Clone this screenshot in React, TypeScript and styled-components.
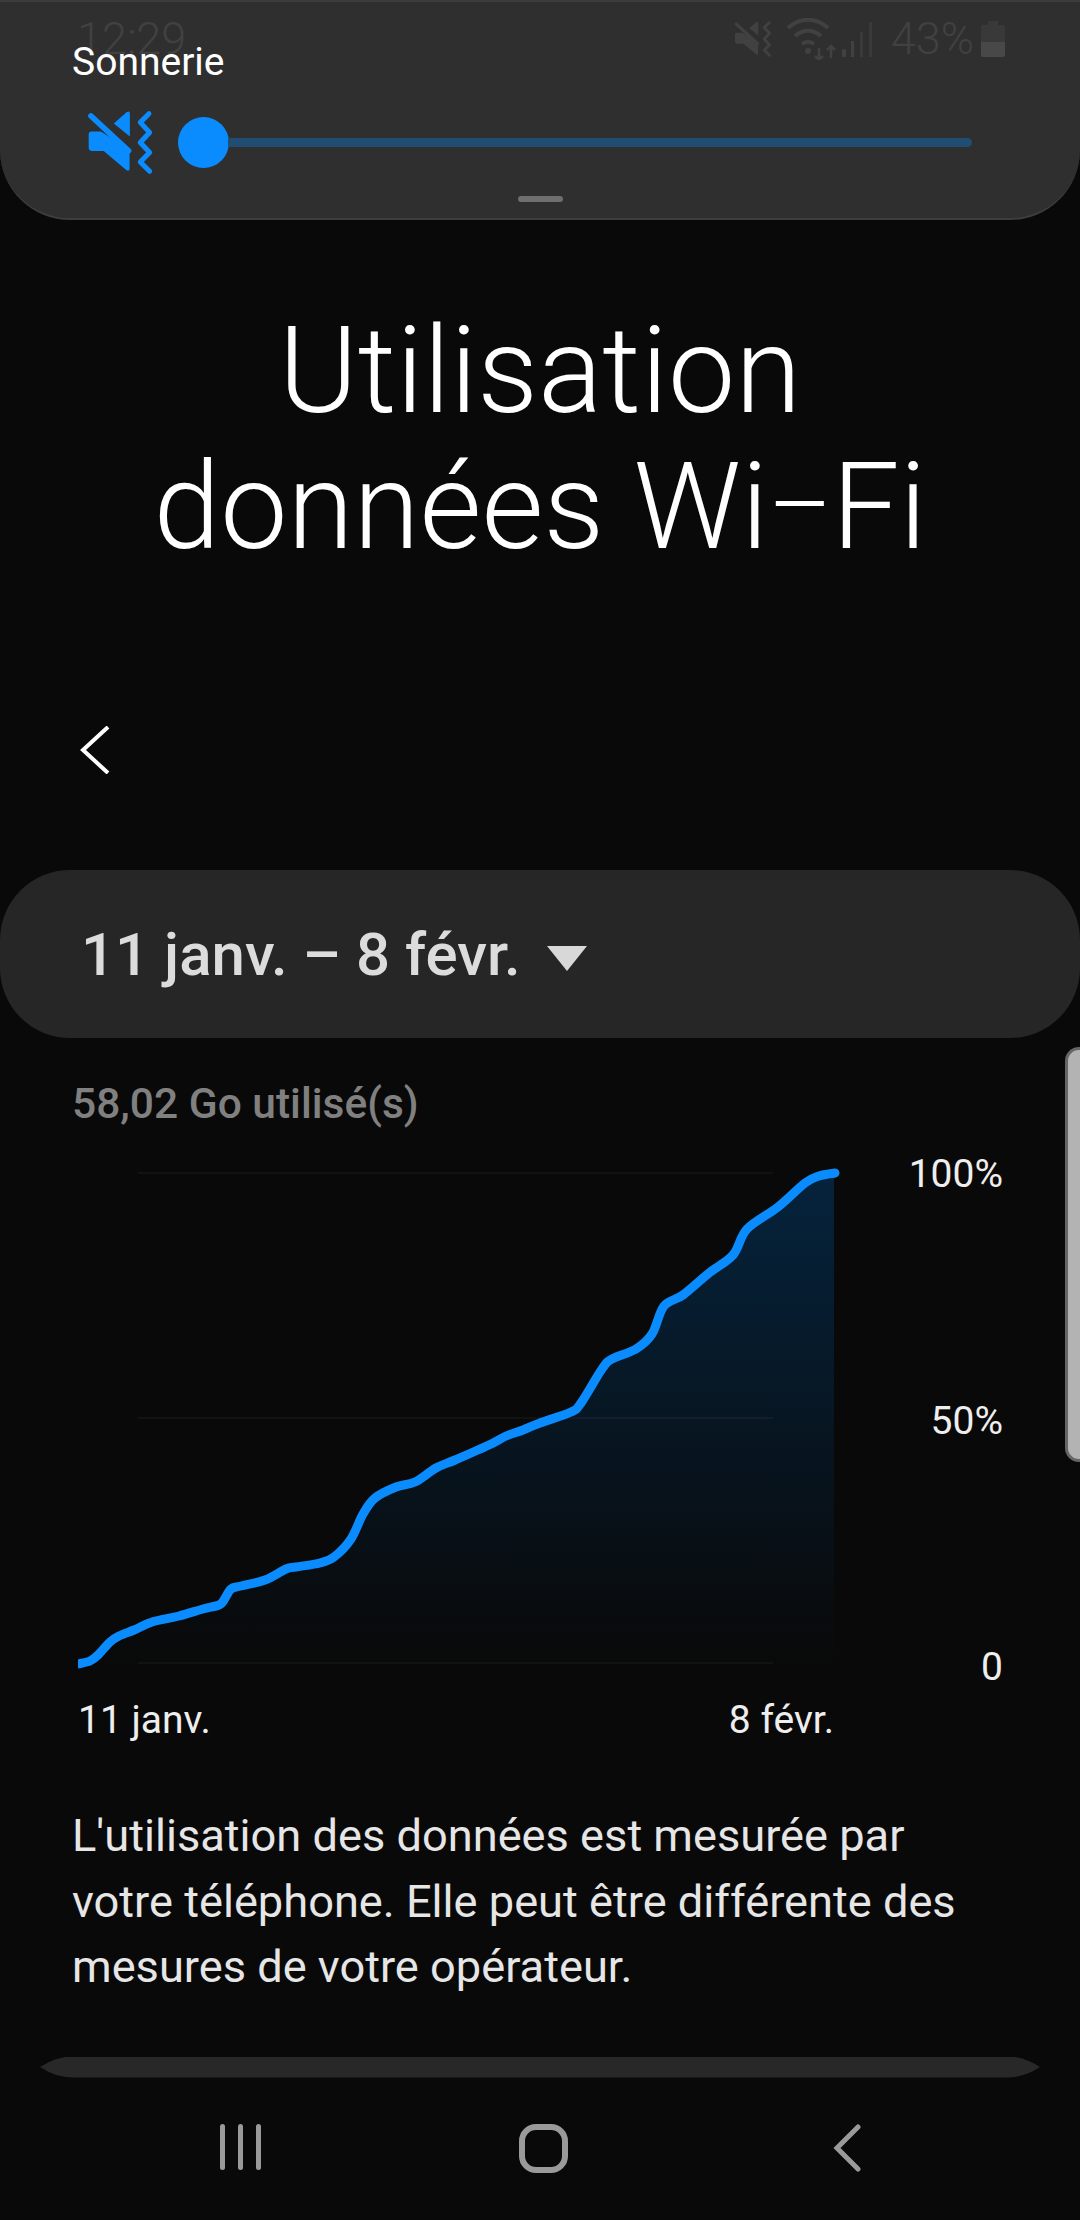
import React from 'react';
import styled, { createGlobalStyle } from 'styled-components';

const GlobalStyle = createGlobalStyle`
  html, body {
    margin: 0;
    padding: 0;
    background: #090909;
  }
`;

const Page = styled.div`
  position: relative;
  width: 1080px;
  height: 2220px;
  overflow: hidden;
  background: #090909;
  color: #fff;
  font-family: Roboto, 'Noto Sans', sans-serif;
  display: flex;
  flex-direction: column;
`;

const Panel = styled.div`
  position: relative;
  box-sizing: border-box;
  height: 220px;
  flex-shrink: 0;
  background: #2f2f2f;
  border-top: 2px solid #3c3c3c;
  border-bottom: 2px solid #3d3d3d;
  border-radius: 0 0 70px 70px;
  padding: 38px 0 0 72px;
`;

const StatusBar = styled.div`
  position: absolute;
  top: 16px;
  left: 77px;
  right: 75px;
  display: flex;
  align-items: center;
  color: #414141;
`;

const StatusTime = styled.span`
  font-size: 45px;
  font-weight: 300;
  line-height: 42px;
  flex: 1;
`;

const StatusPercent = styled.span`
  font-size: 45px;
  font-weight: 300;
  line-height: 42px;
  margin: 0 7px 0 17px;
`;

const PanelLabel = styled.div`
  position: relative;
  font-size: 39px;
  line-height: 44px;
  color: #fff;
`;

const SliderRow = styled.div`
  display: flex;
  align-items: center;
  margin: 25px 0 0 15px;
  height: 67px;
`;

const Thumb = styled.div`
  width: 51px;
  height: 51px;
  border-radius: 50%;
  background: #0a8cff;
  margin-left: 24px;
  flex-shrink: 0;
`;

const Track = styled.div`
  width: 744px;
  height: 9px;
  margin-left: -1px;
  border-radius: 0 5px 5px 0;
  background: #214d73;
`;

const Grabber = styled.div`
  position: absolute;
  left: 518px;
  top: 194px;
  width: 45px;
  height: 6px;
  border-radius: 3px;
  background: #6f6f6f;
`;

const Title = styled.h1`
  margin: 83px 0 0;
  font-size: 120px;
  line-height: 136px;
  font-weight: 300;
  text-align: center;
  color: #fff;
`;

const TitleDash = styled.span`
  font-size: 98px;
  line-height: 0;
  vertical-align: 9px;
`;

const BackButton = styled.div`
  display: flex;
  height: 48px;
  margin: 151px 0 0 80px;
`;

const RangePill = styled.div`
  box-sizing: border-box;
  height: 168px;
  margin-top: 96px;
  border-radius: 70px;
  background: #262626;
  padding-left: 81px;
  display: flex;
  align-items: center;
  gap: 26px;
`;

const RangeText = styled.span`
  font-size: 60px;
  font-weight: 500;
  color: #dcdcdc;
`;

const Caret = styled.div`
  width: 0;
  height: 0;
  margin-top: 8px;
  border-left: 20px solid transparent;
  border-right: 20px solid transparent;
  border-top: 25px solid #d8d8d8;
`;

const UsedLabel = styled.div`
  margin: 43px 0 0 72px;
  font-size: 42.5px;
  line-height: 46px;
  font-weight: 500;
  color: #808080;
`;

const ChartRow = styled.div`
  display: flex;
  height: 515px;
  margin: 34px 77px 0 78px;
`;

const YAxis = styled.div`
  flex: 1;
  display: flex;
  flex-direction: column;
  justify-content: space-between;
  align-items: flex-end;
  margin-bottom: -4px;
`;

const AxisLabel = styled.span`
  font-size: 39px;
  line-height: 26px;
  color: #eee;
`;

const XAxis = styled.div`
  display: flex;
  justify-content: space-between;
  width: 756px;
  margin: 22px 0 0 78px;
  font-size: 39px;
  line-height: 44px;
  color: #eee;
`;

const Note = styled.p`
  margin: 61px 0 0 72px;
  width: 960px;
  font-size: 45.2px;
  line-height: 65.5px;
  color: #e6e6e6;
  white-space: nowrap;
`;

const NextCard = styled.div`
  flex-shrink: 0;
  height: 21px;
  margin: 57px 40px 0;
  background: #282828;
  clip-path: path('M0 10.5Q16 0 32 0H968Q984 0 1000 10.5Q984 21 968 21H32Q16 21 0 10.5Z');
`;

const NavBar = styled.div`
  flex: 1;
  display: grid;
  grid-template-columns: repeat(3, 303px);
  padding: 46px 0 0 89px;
  align-items: start;
  justify-items: center;
`;

const NavIcon = styled.svg`
  display: block;
  color: #9a9a9a;
`;

const SideHandle = styled.div`
  position: absolute;
  top: 1047px;
  right: 0;
  box-sizing: border-box;
  width: 15px;
  height: 415px;
  background: #b3b3b3;
  border: 3px solid #666;
  border-right: none;
  border-radius: 14px 0 0 14px;
`;

const MuteVibrate = ({ size, color }: { size: number; color: string }) => (
  <svg width={size} height={size} viewBox="80 60 200 200" fill={color} style={{ display: 'block', flexShrink: 0 }}>
    <path d="M85 136q0-9 9-9h27l86 53v60q-2 7-10 2l-67-57H95q-10 0-10-10z" />
    <path d="M160 103l38-33q10-6 10 4v68z" />
    <path d="M92 81l112 104" stroke={color} strokeWidth="17" strokeLinecap="round" fill="none" />
    <path d="M265 74l-26 26 28 30-28 30 28 30-28 28 28 28" stroke={color} strokeWidth="15" strokeLinejoin="round" strokeLinecap="round" fill="none" />
  </svg>
);

const StatusWifi = () => (
  <svg width="52" height="42" viewBox="0 0 52 42" fill="none" stroke="#414141" strokeWidth="4" style={{ display: 'block', marginLeft: 14 }}>
    <path d="M2 10c12-11 28-11 40 0" />
    <path d="M9 18c8-7 18-7 26 0" />
    <path d="M16 26c4-3 8-3 12 0" />
    <circle cx="22" cy="33" r="3" fill="#414141" stroke="none" />
    <path d="M33 30v12m-4-4l4 4 4-4" strokeWidth="2.5" />
    <path d="M45 40V28m-4 4l4-4 4 4" strokeWidth="2.5" />
  </svg>
);

const StatusSignal = () => (
  <svg width="32" height="36" viewBox="0 0 32 36" fill="#414141" style={{ display: 'block', marginLeft: 4 }}>
    <rect x="0" y="28" width="4" height="8" rx="1.5" />
    <rect x="9" y="20" width="3" height="16" />
    <rect x="18" y="11" width="3" height="25" fill="#3a3a3a" />
    <rect x="27" y="1" width="3" height="35" fill="#3a3a3a" />
  </svg>
);

const StatusBattery = () => (
  <svg width="24" height="36" viewBox="0 0 24 36" style={{ display: 'block' }}>
    <path d="M7 0h10v4h5q2 0 2 2v28q0 2-2 2H2q-2 0-2-2V6q0-2 2-2h5z" fill="#393939" />
    <path d="M0 21h24v13q0 2-2 2H2q-2 0-2-2z" fill="#484848" />
  </svg>
);

// curve read off the reference, in page coordinates
const usage: [number, number][] = [
  [78, 1663], [90, 1660], [98, 1654], [110, 1641], [119, 1635], [134, 1629], [152, 1621],
  [179, 1615], [203, 1608], [219, 1604], [224, 1599], [231, 1588], [241, 1585], [265, 1579],
  [286, 1568], [296, 1566], [320, 1562], [334, 1556], [351, 1538], [363, 1513], [375, 1497],
  [396, 1486], [415, 1481], [436, 1467], [455, 1459], [489, 1444], [506, 1435], [523, 1429],
  [540, 1422], [571, 1411], [581, 1402], [602, 1368], [612, 1358], [636, 1348], [652, 1333],
  [664, 1305], [683, 1294], [709, 1272], [733, 1254], [747, 1228], [778, 1206], [805, 1182],
  [819, 1175], [835, 1172],
];

const smoothPath = (pts: [number, number][]) => {
  let d = `M${pts[0][0]} ${pts[0][1]}`;
  for (let i = 0; i < pts.length - 1; i++) {
    const p0 = pts[Math.max(i - 1, 0)];
    const p1 = pts[i];
    const p2 = pts[i + 1];
    const p3 = pts[Math.min(i + 2, pts.length - 1)];
    const c1x = p1[0] + (p2[0] - p0[0]) / 6;
    const c1y = p1[1] + (p2[1] - p0[1]) / 6;
    const c2x = p2[0] - (p3[0] - p1[0]) / 6;
    const c2y = p2[1] - (p3[1] - p1[1]) / 6;
    d += `C${c1x.toFixed(1)} ${c1y.toFixed(1)} ${c2x.toFixed(1)} ${c2y.toFixed(1)} ${p2[0]} ${p2[1]}`;
  }
  return d;
};

const linePath = smoothPath(usage);

const UsageChart = () => (
  <svg width="764" height="515" viewBox="78 1160 764 515" style={{ display: 'block', flexShrink: 0 }}>
    <defs>
      <linearGradient id="usageFill" x1="0" y1="0" x2="0" y2="1">
        <stop offset="0" stopColor="#05233c" />
        <stop offset="1" stopColor="#090909" />
      </linearGradient>
    </defs>
    <path d={`${linePath}L834 1172L834 1664L78 1664Z`} fill="url(#usageFill)" />
    {[1172, 1417, 1662].map((y) => (
      <rect key={y} x="138" y={y - 1} width="635" height="2" fill="#fff" opacity="0.04" />
    ))}
    <path d={linePath} fill="none" stroke="#0a8cff" strokeWidth="9" strokeLinecap="round" strokeLinejoin="round" />
  </svg>
);

const App: React.FC = () => (
  <Page>
    <GlobalStyle />
    <Panel>
      <StatusBar>
        <StatusTime>12:29</StatusTime>
        <MuteVibrate size={38} color="#414141" />
        <StatusWifi />
        <StatusSignal />
        <StatusPercent>43%</StatusPercent>
        <StatusBattery />
      </StatusBar>
      <PanelLabel>Sonnerie</PanelLabel>
      <SliderRow>
        <MuteVibrate size={67} color="#0a8cff" />
        <Thumb />
        <Track />
      </SliderRow>
      <Grabber />
    </Panel>

    <Title>
      Utilisation
      <br />
      données Wi<TitleDash>–</TitleDash>Fi
    </Title>

    <BackButton>
      <svg width="30" height="48" viewBox="0 0 30 48" fill="none" stroke="#fff" strokeWidth="4">
        <path d="M28 1L3 24l25 23" />
      </svg>
    </BackButton>

    <RangePill>
      <RangeText>11 janv. – 8 févr.</RangeText>
      <Caret />
    </RangePill>

    <UsedLabel>58,02 Go utilisé(s)</UsedLabel>

    <ChartRow>
      <UsageChart />
      <YAxis>
        <AxisLabel>100%</AxisLabel>
        <AxisLabel>50%</AxisLabel>
        <AxisLabel>0</AxisLabel>
      </YAxis>
    </ChartRow>
    <XAxis>
      <span>11 janv.</span>
      <span>8 févr.</span>
    </XAxis>

    <Note>
      L'utilisation des données est mesurée par
      <br />
      votre téléphone. Elle peut être différente des
      <br />
      mesures de votre opérateur.
    </Note>

    <NextCard />

    <NavBar>
      <NavIcon width="42" height="46" viewBox="0 0 42 46" fill="currentColor">
        <rect x="0" y="0" width="5" height="46" rx="2.5" />
        <rect x="18" y="0" width="5" height="46" rx="2.5" />
        <rect x="36" y="0" width="5" height="46" rx="2.5" />
      </NavIcon>
      <NavIcon width="49" height="49" viewBox="0 0 49 49" fill="none" stroke="currentColor" strokeWidth="6">
        <rect x="3" y="3" width="43" height="43" rx="14" />
      </NavIcon>
      <NavIcon width="28" height="48" viewBox="0 0 28 48" fill="none" stroke="currentColor" strokeWidth="5" strokeLinecap="round">
        <path d="M25 3L4 24l21 21" />
      </NavIcon>
    </NavBar>

    <SideHandle />
  </Page>
);

export default App;
